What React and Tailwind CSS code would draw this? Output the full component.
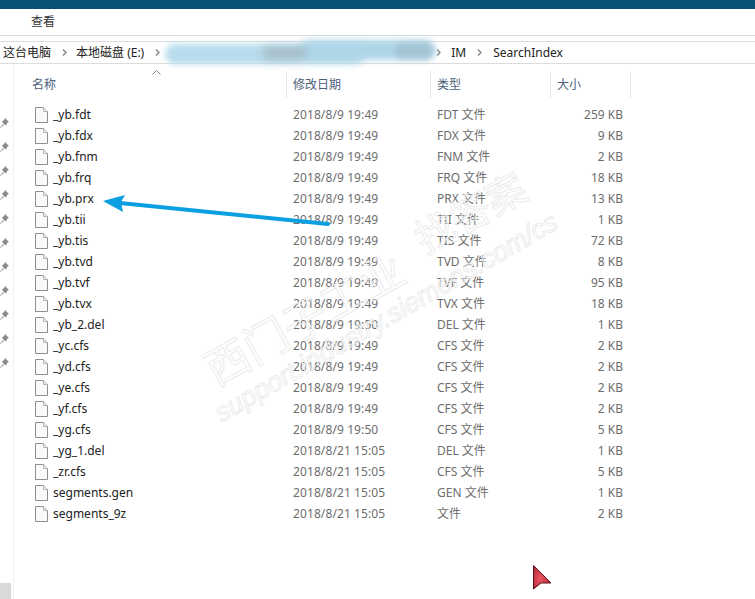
const rows = [
  ["_yb.fdt","2018/8/9 19:49","FDT 文件","259 KB"],
  ["_yb.fdx","2018/8/9 19:49","FDX 文件","9 KB"],
  ["_yb.fnm","2018/8/9 19:49","FNM 文件","2 KB"],
  ["_yb.frq","2018/8/9 19:49","FRQ 文件","18 KB"],
  ["_yb.prx","2018/8/9 19:49","PRX 文件","13 KB"],
  ["_yb.tii","2018/8/9 19:49","TII 文件","1 KB"],
  ["_yb.tis","2018/8/9 19:49","TIS 文件","72 KB"],
  ["_yb.tvd","2018/8/9 19:49","TVD 文件","8 KB"],
  ["_yb.tvf","2018/8/9 19:49","TVF 文件","95 KB"],
  ["_yb.tvx","2018/8/9 19:49","TVX 文件","18 KB"],
  ["_yb_2.del","2018/8/9 19:50","DEL 文件","1 KB"],
  ["_yc.cfs","2018/8/9 19:49","CFS 文件","2 KB"],
  ["_yd.cfs","2018/8/9 19:49","CFS 文件","2 KB"],
  ["_ye.cfs","2018/8/9 19:49","CFS 文件","2 KB"],
  ["_yf.cfs","2018/8/9 19:49","CFS 文件","2 KB"],
  ["_yg.cfs","2018/8/9 19:50","CFS 文件","5 KB"],
  ["_yg_1.del","2018/8/21 15:05","DEL 文件","1 KB"],
  ["_zr.cfs","2018/8/21 15:05","CFS 文件","5 KB"],
  ["segments.gen","2018/8/21 15:05","GEN 文件","1 KB"],
  ["segments_9z","2018/8/21 15:05","文件","2 KB"],
];

function FileIcon() {
  return (
    <svg width="13" height="16" viewBox="0 0 13 16" className="shrink-0">
      <path d="M.5.5H8.5L12.5 4.5V15.5H.5Z" fill="#fafafa" stroke="#8f8f8f" />
      <path d="M8.5.5V4.5H12.5" fill="#ececec" stroke="#b5b5b5" />
    </svg>
  );
}

function Pin() {
  return (
    <svg width="9" height="10" viewBox="0 0 9 10">
      <path d="M5 0L9 4L7.6 4.6L6.3 6.8L5.6 7.6L1.8 3.8L3 3L4.6 1.3Z" fill="#8a8a8a" />
      <path d="M3 6L0 9.5L0.5 10L4 7Z" fill="#a5a5a5" />
    </svg>
  );
}

function Chevron() {
  return (
    <svg width="5" height="7" viewBox="0 0 5 7" className="shrink-0">
      <path d="M1 0.5L4 3.5L1 6.5" fill="none" stroke="#8a8a8a" strokeWidth="1.5" />
    </svg>
  );
}

export default function App() {
  return (
    <div className="relative w-[755px] h-[599px] overflow-hidden bg-white text-[12px] font-['Noto_Sans','Noto_Sans_CJK_SC',sans-serif]">
      <div className="h-[9px] bg-[#085274]" />

      <div className="h-[26px] flex items-center border-b border-[#dcdcdc] box-content">
        <span className="ml-[31px] text-[#333]">查看</span>
      </div>

      <div className="mt-[5px] h-[21px] border-y border-[#dcdcdc] box-content flex items-center text-[#222]">
        <span className="ml-[3px]">这台电脑</span>
        <span className="ml-[11px]"><Chevron /></span>
        <span className="ml-[9px]">本地磁盘 (E:)</span>
        <span className="ml-[11px]"><Chevron /></span>
        <span className="ml-[276px]"><Chevron /></span>
        <span className="ml-[10px]">IM</span>
        <span className="ml-[11px]"><Chevron /></span>
        <span className="ml-[11px]">SearchIndex</span>
      </div>

      <div className="flex h-[536px]">
        <div className="w-[14px] border-r border-[#f0f0f0] flex flex-col gap-[14px] pt-[54px]">
          {Array.from({ length: 11 }).map((_, i) => (
            <Pin key={i} />
          ))}
        </div>

        <div className="flex-1 pt-[7px]">
          <div className="relative h-[27px] flex text-[#4c607a]">
            <svg width="9" height="5" viewBox="0 0 9 5" className="absolute left-[138px] -top-[1px]">
              <path d="M.5 4.5L4.5 .5L8.5 4.5" fill="none" stroke="#8a8a8a" />
            </svg>
            <div className="w-[273px] h-[27px] pl-[18px] pt-[5px] border-r border-[#e5e5e5]">名称</div>
            <div className="w-[144px] h-[27px] pl-[6px] pt-[5px] border-r border-[#e5e5e5]">修改日期</div>
            <div className="w-[120px] h-[27px] pl-[6px] pt-[5px] border-r border-[#e5e5e5]">类型</div>
            <div className="w-[80px] h-[27px] pl-[6px] pt-[5px] border-r border-[#e5e5e5]">大小</div>
          </div>
          <div className="mt-[6px]">
            {rows.map((r) => (
              <div key={r[0]} className="h-[21px] flex items-center text-[#6d6d6d]">
                <div className="w-[272px] flex items-center pl-[21px] gap-[5px] text-[#222]">
                  <FileIcon />
                  <span>{r[0]}</span>
                </div>
                <div className="w-[144px] pl-[7px] tracking-[0.1px]">{r[1]}</div>
                <div className="w-[113px] pl-[7px]">{r[2]}</div>
                <div className="w-[80px] text-right">{r[3]}</div>
              </div>
            ))}
          </div>
        </div>
      </div>

      <div className="absolute left-0 top-[583px] w-[11px] h-[16px] bg-[#d9d9d9]" />

      {/* blurred redaction */}
      <div className="absolute left-[165px] top-[44px] w-[200px] h-[20px] rounded-full bg-[#b7dcec] blur-[3px]" />
      <div className="absolute left-[300px] top-[40px] w-[135px] h-[20px] rounded-full bg-[#aed6e8] blur-[3px]" />
      <div className="absolute left-[262px] top-[47px] w-[45px] h-[12px] rounded-full bg-[#a6bcc8] blur-[4px]" />
      <div className="absolute left-[395px] top-[44px] w-[38px] h-[14px] rounded-full bg-[#a3c3d2] blur-[3px]" />

      {/* watermark */}
      <div className="absolute left-[208px] top-[350px] origin-left -rotate-[29deg] text-[44px] leading-none whitespace-nowrap text-transparent [-webkit-text-stroke:1px_#ececec] pointer-events-none">西门子工业</div>
      <div className="absolute left-[418px] top-[222px] origin-left -rotate-[29deg] text-[40px] leading-none whitespace-nowrap text-transparent [-webkit-text-stroke:1px_#ececec] pointer-events-none">找答案</div>
      <div className="absolute left-[217px] top-[402px] origin-left -rotate-[30deg] text-[27px] italic leading-none whitespace-nowrap text-transparent font-['Liberation_Sans',sans-serif] [-webkit-text-stroke:1px_#ececec] pointer-events-none">support.industry.siemens.com/cs</div>

      {/* arrow */}
      <svg width="240" height="40" viewBox="0 0 240 40" className="absolute left-[100px] top-[190px] pointer-events-none">
        <path d="M228 34L20 13" stroke="#0a9fe0" strokeWidth="4" strokeLinecap="round" />
        <path d="M3 11L25 5L21 12L23 22Z" fill="#0a9fe0" />
      </svg>

      {/* cursor */}
      <svg width="19" height="26" viewBox="0 0 19 26" className="absolute left-[533px] top-[565px]">
        <defs>
          <radialGradient id="c" cx="0.4" cy="0.55" r="0.6">
            <stop offset="0" stopColor="#ee5565" />
            <stop offset="1" stopColor="#b02a38" />
          </radialGradient>
        </defs>
        <path d="M0.5 0.5L18 18H8L0.5 24Z" fill="url(#c)" stroke="#5a1018" strokeWidth="1" />
      </svg>
    </div>
  );
}
